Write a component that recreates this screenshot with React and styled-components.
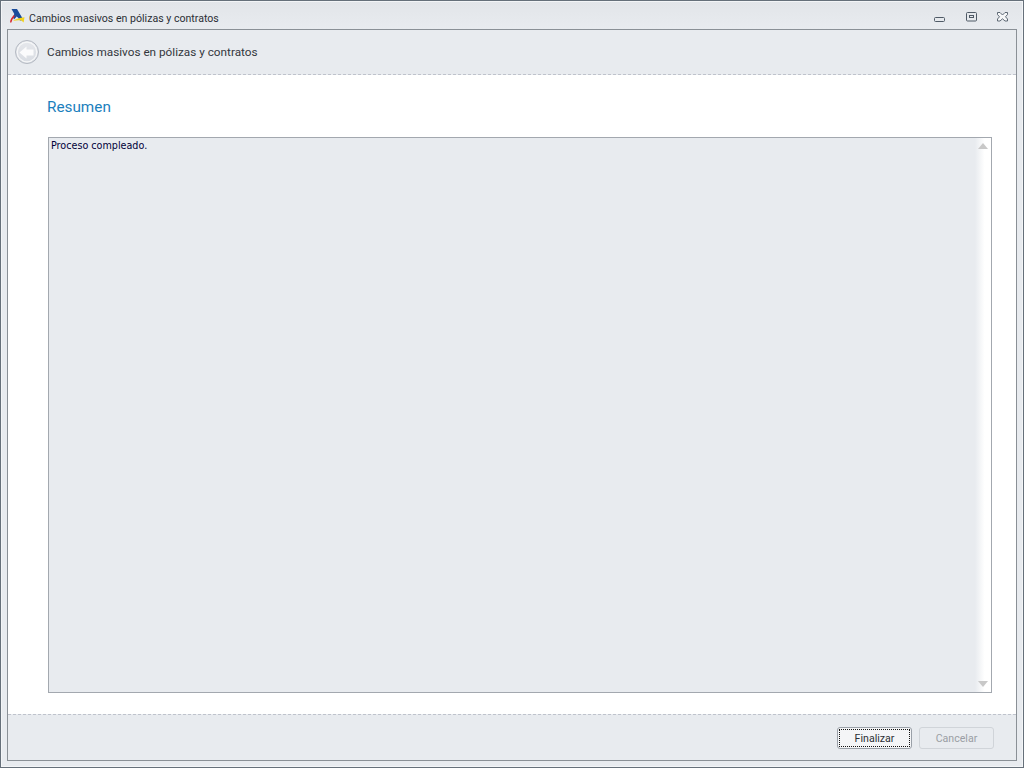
import React from 'react'
import styled, { createGlobalStyle } from 'styled-components'

const Global = createGlobalStyle`
html, body {
  margin: 0;
  padding: 0;
  background: #e8ebef;
}
`

function Logo() {
  return (
    <svg width="16" height="16" viewBox="0 2 16 16" overflow="visible">
      <path d="M2.5 1 H8 L14.5 12 L11 12.5 L9 9.5 L6.5 8 Z" fill="#1a4c9a" />
      <path d="M5.5 5.5 L7.5 8.8 L5 11.5 L4 9 Z" fill="#1a4c9a" />
      <path d="M1 14.5 C1.2 11.5 3 8.8 5 7 L5.8 8.6 C4.2 10.2 3 12 2.4 14.5 Z" fill="#d8262c" />
      <path d="M4 13 C7 10.6 11 10 15.5 9.2 L14.6 14.5 L12.4 12.4 C9.8 12 7 12.2 4 13 Z" fill="#f2d21b" />
    </svg>
  )
}

function BackIcon() {
  return (
    <svg width="24" height="24" viewBox="0 0 24 24">
      <defs>
        <linearGradient id="backFill" x1="0" y1="0" x2="0" y2="1">
          <stop offset="0" stopColor="#e6e8ec" />
          <stop offset="1" stopColor="#d8dce2" />
        </linearGradient>
      </defs>
      <circle cx="12" cy="12" r="11.5" fill="url(#backFill)" stroke="#b4b9c2" strokeWidth="1" />
      <circle cx="12" cy="12" r="9.8" fill="none" stroke="#f6f7f8" strokeWidth="1.2" />
      <path d="M4.5 12.5 L11.5 6.5 V9.5 H18.5 V15.5 H11.5 V18.5 Z" fill="#fbfbfc" />
    </svg>
  )
}

function MinIcon() {
  return (
    <svg width="12" height="12" viewBox="0 0 12 12" overflow="visible">
      <rect x="-0.5" y="5.5" width="10" height="4" rx="1" fill="none" stroke="#4f5a66" />
    </svg>
  )
}

function MaxIcon() {
  return (
    <svg width="12" height="12" viewBox="0 0 12 12">
      <rect x="0.5" y="0.5" width="10" height="8.5" rx="1" fill="none" stroke="#4f5a66" />
      <rect x="3.5" y="3.5" width="4" height="2" fill="none" stroke="#4f5a66" />
    </svg>
  )
}

function CloseIcon() {
  return (
    <svg width="12" height="12" viewBox="0 0 12 12">
      <path
        d="M.5 .5 H3 L5.5 3 L8 .5 H10.5 V2.5 L8.5 4.8 L10.5 7 V9 H8 L5.5 6.8 L3 9 H.5 V7 L2.5 4.8 L.5 2.5 Z"
        fill="#f6f7f8"
        stroke="#4f5a66"
        strokeWidth="0.9"
      />
    </svg>
  )
}

export default function App() {
  return (
    <>
      <Global />
      <Win>
        <TitleBar>
          <TitleLeft>
            <Logo />
            <TitleText>Cambios masivos en pólizas y contratos</TitleText>
          </TitleLeft>
          <WinButtons>
            <WinButton><MinIcon /></WinButton>
            <WinButton><MaxIcon /></WinButton>
            <WinButton><CloseIcon /></WinButton>
          </WinButtons>
        </TitleBar>
        <Frame>
          <Header>
            <BackButton><BackIcon /></BackButton>
            <HeaderText>Cambios masivos en pólizas y contratos</HeaderText>
          </Header>
          <Body>
            <Heading>Resumen</Heading>
            <LogBox>
              <LogText>Proceso compleado.</LogText>
              <ScrollTrack>
                <ArrowUp />
                <ArrowDown />
              </ScrollTrack>
            </LogBox>
          </Body>
          <Footer>
            <PrimaryButton><FocusRing>Finalizar</FocusRing></PrimaryButton>
            <DisabledButton disabled>Cancelar</DisabledButton>
          </Footer>
        </Frame>
      </Win>
    </>
  )
}

const Win = styled.div`
  width: 1024px;
  height: 768px;
  box-sizing: border-box;
  display: flex;
  flex-direction: column;
  padding: 0 6px 6px 6px;
  border: 1px solid #66707a;
  box-shadow: inset 0 0 0 1px #f3f5f7;
  background: linear-gradient(#e2e5e9, #e8ebef 28px);
  font-family: "Roboto", "Liberation Sans", sans-serif;
  overflow: hidden;
`
const TitleBar = styled.div`
  height: 28px;
  flex: none;
  box-sizing: border-box;
  padding-top: 6px;
  display: flex;
  align-items: center;
  justify-content: space-between;
`
const TitleLeft = styled.div`
  display: flex;
  align-items: center;
  gap: 4px;
  padding-left: 2px;
`
const TitleText = styled.span`
  font-size: 10.6px;
  color: #2b2f35;
`
const WinButtons = styled.div`
  display: flex;
  gap: 19px;
  padding-right: 8px;
`
const WinButton = styled.div`
  width: 12px;
  height: 12px;
  display: flex;
`
const Frame = styled.div`
  flex: 1;
  min-height: 0;
  display: flex;
  flex-direction: column;
  border: 1px solid #8a9096;
  background: #fff;
`
const Header = styled.div`
  height: 44px;
  flex: none;
  display: flex;
  align-items: center;
  gap: 8px;
  padding-left: 7px;
  background: #e8ebef;
  border-bottom: 1px dashed #bfc3cc;
`
const BackButton = styled.div`
  width: 24px;
  height: 24px;
  display: flex;
`
const HeaderText = styled.span`
  font-size: 11.75px;
  color: #33373d;
`
const Body = styled.div`
  flex: 1;
  min-height: 0;
  display: flex;
  flex-direction: column;
  padding: 22px 24px 21px 39px;
`
const Heading = styled.h2`
  margin: 0 0 19px 0;
  font-size: 15.3px;
  line-height: 21px;
  font-weight: 400;
  color: #1b80bd;
`
const LogBox = styled.div`
  flex: 1;
  min-height: 0;
  position: relative;
  margin-left: 1px;
  border: 1px solid #a3a8af;
  background: #e8ebef;
`
const LogText = styled.div`
  padding: 1px 2px;
  font-family: "DejaVu Sans", "Liberation Sans", sans-serif;
  font-size: 9.6px;
  line-height: 13px;
  color: #000038;
`
const ScrollTrack = styled.div`
  position: absolute;
  top: 0;
  right: 0;
  bottom: 0;
  width: 16px;
  display: flex;
  flex-direction: column;
  justify-content: space-between;
  align-items: center;
  padding: 5px 0;
  box-sizing: border-box;
  background: linear-gradient(90deg, #e8ebef, #fff 60%);
`
const ArrowUp = styled.div`
  width: 0;
  height: 0;
  border-left: 5px solid transparent;
  border-right: 5px solid transparent;
  border-bottom: 6px solid #c8c8c8;
`
const ArrowDown = styled(ArrowUp)`
  border-bottom: 0;
  border-top: 6px solid #c8c8c8;
`
const Footer = styled.div`
  height: 46px;
  flex: none;
  box-sizing: border-box;
  display: flex;
  align-items: center;
  justify-content: flex-end;
  gap: 7px;
  padding-right: 22px;
  background: #e8ebef;
  border-top: 1px dashed #bfc3cc;
`
const PrimaryButton = styled.button`
  width: 75px;
  height: 22px;
  padding: 1px;
  border: 1px solid #9aa0a8;
  border-radius: 3px;
  background: #f4f5f7;
  font-family: "Roboto", "Liberation Sans", sans-serif;
  font-size: 10.6px;
  color: #2b2f35;
`
const FocusRing = styled.span`
  display: flex;
  align-items: center;
  justify-content: center;
  height: 100%;
  box-sizing: border-box;
  padding-top: 1px;
  border: 1px dotted #111;
`
const DisabledButton = styled.button`
  width: 75px;
  height: 22px;
  padding: 1px 0 0;
  border: 1px solid #d0d4d9;
  border-radius: 3px;
  background: #e8ebef;
  font-family: "Roboto", "Liberation Sans", sans-serif;
  font-size: 10.6px;
  color: #9a9ea4;
`
